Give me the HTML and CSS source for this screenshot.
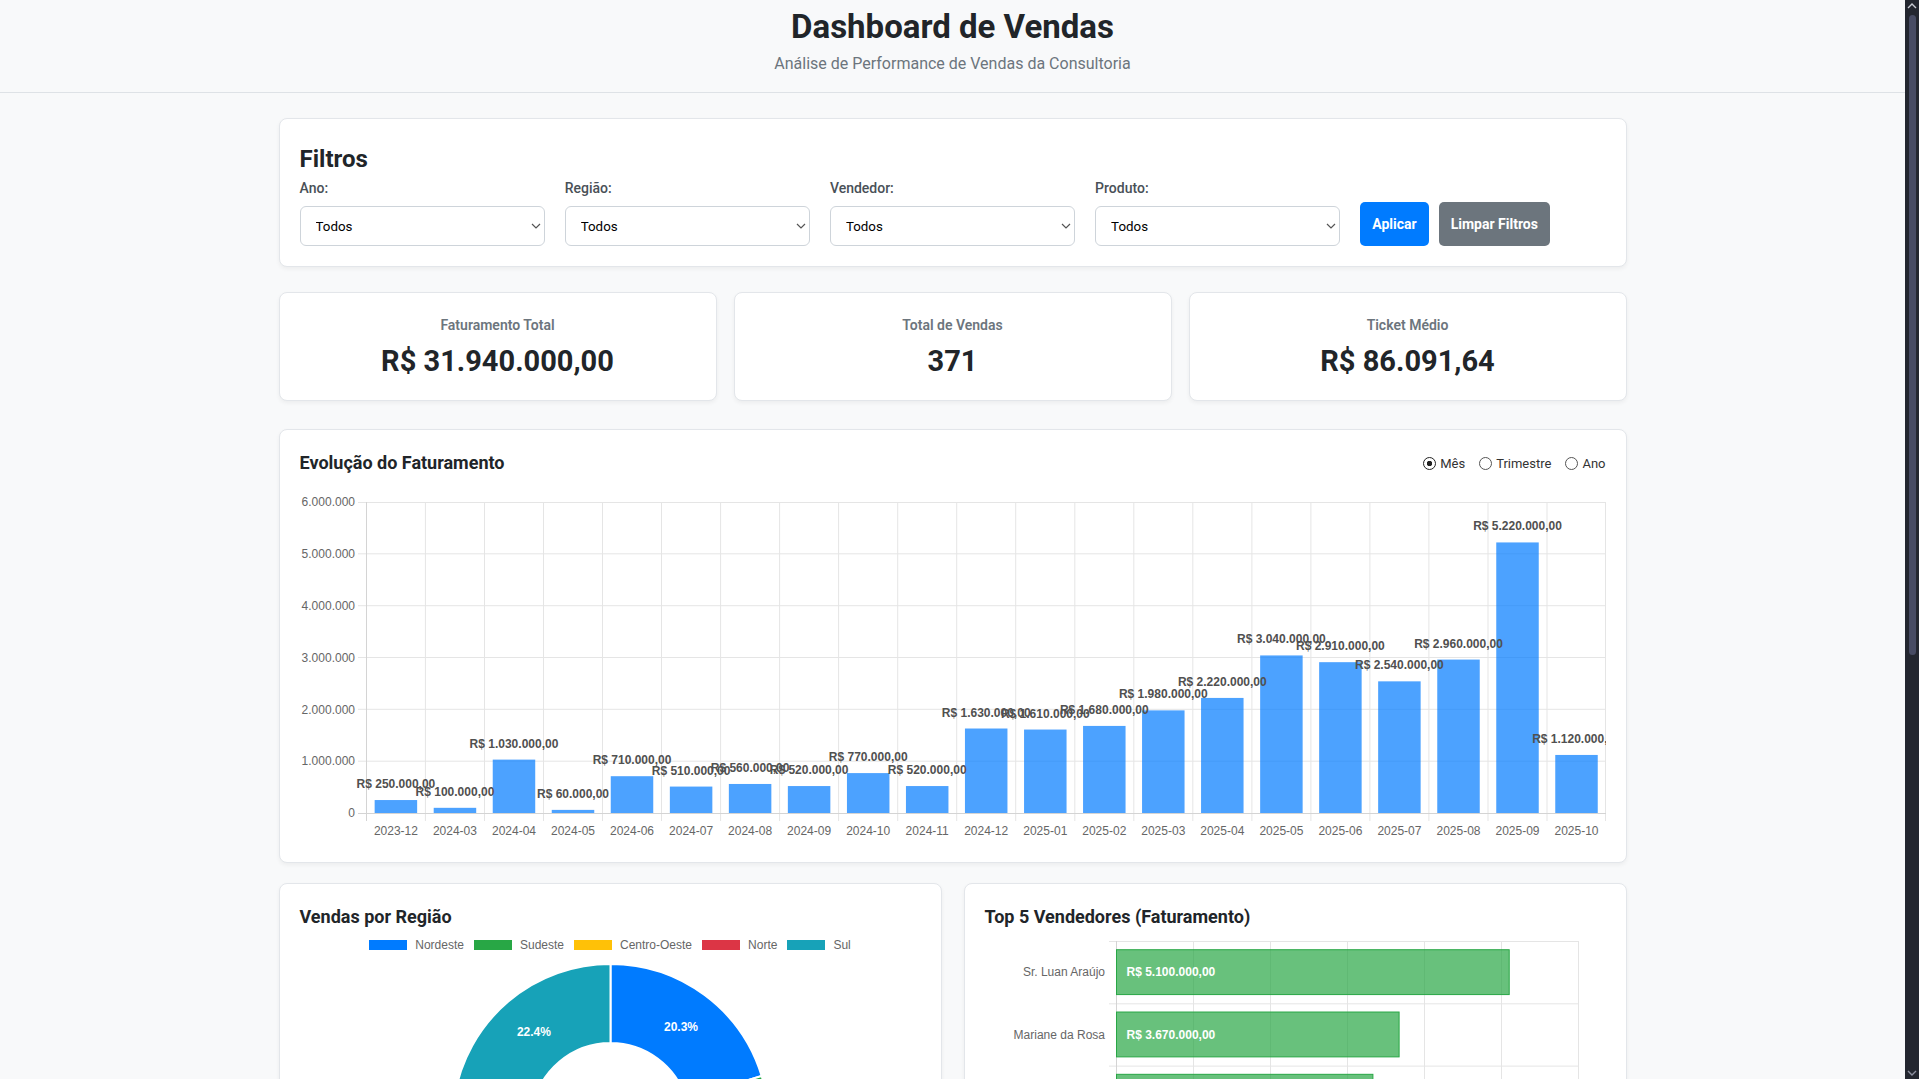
FILE: index.html
```html
<!DOCTYPE html>
<html lang="pt-BR">
<head>
<meta charset="utf-8">
<title>Dashboard de Vendas</title>
<link rel="stylesheet" href="styles.css">
</head>
<body>
<div class="fake-scrollbar" aria-hidden="true">
  <svg class="scroll-arrow scroll-arrow-up" width="10" height="6" viewBox="0 0 10 6"><path d="M1 5l4-4 4 4" fill="none" stroke="#c8cad3" stroke-width="1.4"/></svg>
  <div class="scroll-thumb"></div>
  <svg class="scroll-arrow scroll-arrow-down" width="10" height="6" viewBox="0 0 10 6"><path d="M1 1l4 4 4-4" fill="none" stroke="#8d90a0" stroke-width="1.4"/></svg>
</div>

<header class="page-header">
  <h1 class="page-title">Dashboard de Vendas</h1>
  <p class="page-subtitle">Análise de Performance de Vendas da Consultoria</p>
</header>

<main class="container">
  <section class="card filters-card">
    <h2 class="filters-title">Filtros</h2>
    <div class="filters-row">
      <div class="filter-group">
        <label class="filter-label" for="f-ano">Ano:</label>
        <div class="select-wrap">
          <select id="f-ano" class="filter-select"><option>Todos</option></select>
          <svg class="select-chevron" width="10" height="6" viewBox="0 0 10 6"><path d="M1 1l4 4 4-4" fill="none" stroke="#555" stroke-width="1.2"/></svg>
        </div>
      </div>
      <div class="filter-group">
        <label class="filter-label" for="f-regiao">Região:</label>
        <div class="select-wrap">
          <select id="f-regiao" class="filter-select"><option>Todos</option></select>
          <svg class="select-chevron" width="10" height="6" viewBox="0 0 10 6"><path d="M1 1l4 4 4-4" fill="none" stroke="#555" stroke-width="1.2"/></svg>
        </div>
      </div>
      <div class="filter-group">
        <label class="filter-label" for="f-vendedor">Vendedor:</label>
        <div class="select-wrap">
          <select id="f-vendedor" class="filter-select"><option>Todos</option></select>
          <svg class="select-chevron" width="10" height="6" viewBox="0 0 10 6"><path d="M1 1l4 4 4-4" fill="none" stroke="#555" stroke-width="1.2"/></svg>
        </div>
      </div>
      <div class="filter-group">
        <label class="filter-label" for="f-produto">Produto:</label>
        <div class="select-wrap">
          <select id="f-produto" class="filter-select"><option>Todos</option></select>
          <svg class="select-chevron" width="10" height="6" viewBox="0 0 10 6"><path d="M1 1l4 4 4-4" fill="none" stroke="#555" stroke-width="1.2"/></svg>
        </div>
      </div>
      <div class="filter-group filter-actions">
        <button class="btn btn-primary" type="button">Aplicar</button>
        <button class="btn btn-secondary" type="button">Limpar Filtros</button>
      </div>
    </div>
  </section>

  <section class="kpi-row">
    <div class="card kpi-card">
      <div class="kpi-label">Faturamento Total</div>
      <div class="kpi-value">R$ 31.940.000,00</div>
    </div>
    <div class="card kpi-card">
      <div class="kpi-label">Total de Vendas</div>
      <div class="kpi-value">371</div>
    </div>
    <div class="card kpi-card">
      <div class="kpi-label">Ticket Médio</div>
      <div class="kpi-value">R$ 86.091,64</div>
    </div>
  </section>

  <section class="card evolution-card">
    <div class="chart-header">
      <h3 class="chart-title">Evolução do Faturamento</h3>
      <div class="period-options">
        <label class="radio-option"><input class="radio-input" type="radio" name="period" checked>Mês</label>
        <label class="radio-option"><input class="radio-input" type="radio" name="period">Trimestre</label>
        <label class="radio-option"><input class="radio-input" type="radio" name="period">Ano</label>
      </div>
    </div>
    <svg class="evolution-chart" width="1306" height="352" viewBox="0 0 1306 352">
      <g class="grid" stroke="#e5e5e5" stroke-width="1">
        <line x1="58" y1="12.5" x2="1306" y2="12.5"/>
        <line x1="58" y1="63.8" x2="1306" y2="63.8"/>
        <line x1="58" y1="115.7" x2="1306" y2="115.7"/>
        <line x1="58" y1="167.5" x2="1306" y2="167.5"/>
        <line x1="58" y1="219.3" x2="1306" y2="219.3"/>
        <line x1="58" y1="271.2" x2="1306" y2="271.2"/>
        <line x1="125.4" y1="12" x2="125.4" y2="331"/>
        <line x1="184.5" y1="12" x2="184.5" y2="331"/>
        <line x1="243.5" y1="12" x2="243.5" y2="331"/>
        <line x1="302.5" y1="12" x2="302.5" y2="331"/>
        <line x1="361.5" y1="12" x2="361.5" y2="331"/>
        <line x1="420.6" y1="12" x2="420.6" y2="331"/>
        <line x1="479.6" y1="12" x2="479.6" y2="331"/>
        <line x1="538.6" y1="12" x2="538.6" y2="331"/>
        <line x1="597.7" y1="12" x2="597.7" y2="331"/>
        <line x1="656.7" y1="12" x2="656.7" y2="331"/>
        <line x1="715.7" y1="12" x2="715.7" y2="331"/>
        <line x1="774.8" y1="12" x2="774.8" y2="331"/>
        <line x1="833.8" y1="12" x2="833.8" y2="331"/>
        <line x1="892.8" y1="12" x2="892.8" y2="331"/>
        <line x1="951.9" y1="12" x2="951.9" y2="331"/>
        <line x1="1010.9" y1="12" x2="1010.9" y2="331"/>
        <line x1="1069.9" y1="12" x2="1069.9" y2="331"/>
        <line x1="1128.9" y1="12" x2="1128.9" y2="331"/>
        <line x1="1188" y1="12" x2="1188" y2="331"/>
        <line x1="1247" y1="12" x2="1247" y2="331"/>
        <line x1="1305.5" y1="12" x2="1305.5" y2="331"/>
      </g>
      <g stroke="#d4d4d4" stroke-width="1">
        <line x1="66.5" y1="12" x2="66.5" y2="331"/>
        <line x1="58" y1="323.5" x2="1306" y2="323.5"/>
      </g>
      <g class="axis-text" text-anchor="end">
        <text x="55" y="16">6.000.000</text>
        <text x="55" y="68">5.000.000</text>
        <text x="55" y="120">4.000.000</text>
        <text x="55" y="171.5">3.000.000</text>
        <text x="55" y="223.5">2.000.000</text>
        <text x="55" y="275">1.000.000</text>
        <text x="55" y="327">0</text>
      </g>
      <g class="bars-blue">
        <rect x="74.65" y="310.04" width="42.5" height="12.96"/>
        <rect x="133.70" y="317.82" width="42.5" height="5.18"/>
        <rect x="192.73" y="269.61" width="42.5" height="53.39"/>
        <rect x="251.75" y="319.89" width="42.5" height="3.11"/>
        <rect x="310.75" y="286.20" width="42.5" height="36.80"/>
        <rect x="369.85" y="296.57" width="42.5" height="26.43"/>
        <rect x="428.85" y="293.97" width="42.5" height="29.03"/>
        <rect x="487.85" y="296.05" width="42.5" height="26.95"/>
        <rect x="546.95" y="283.09" width="42.5" height="39.91"/>
        <rect x="605.95" y="296.05" width="42.5" height="26.95"/>
        <rect x="664.95" y="238.51" width="42.5" height="84.49"/>
        <rect x="724.05" y="239.55" width="42.5" height="83.45"/>
        <rect x="783.05" y="235.92" width="42.5" height="87.08"/>
        <rect x="842.05" y="220.37" width="42.5" height="102.63"/>
        <rect x="901.05" y="207.93" width="42.5" height="115.07"/>
        <rect x="960.15" y="165.43" width="42.5" height="157.57"/>
        <rect x="1019.15" y="172.17" width="42.5" height="150.83"/>
        <rect x="1078.15" y="191.34" width="42.5" height="131.66"/>
        <rect x="1137.25" y="169.57" width="42.5" height="153.43"/>
        <rect x="1196.25" y="52.43" width="42.5" height="270.57"/>
        <rect x="1255.25" y="264.95" width="42.5" height="58.05"/>
      </g>
      <g class="data-labels" text-anchor="middle">
        <text x="95.9" y="298">R$ 250.000,00</text>
        <text x="154.95" y="305.8">R$ 100.000,00</text>
        <text x="213.98" y="257.6">R$ 1.030.000,00</text>
        <text x="273" y="307.9">R$ 60.000,00</text>
        <text x="332" y="274.2">R$ 710.000,00</text>
        <text x="391.1" y="284.6">R$ 510.000,00</text>
        <text x="450.1" y="282">R$ 560.000,00</text>
        <text x="509.1" y="284">R$ 520.000,00</text>
        <text x="568.2" y="271.1">R$ 770.000,00</text>
        <text x="627.2" y="284">R$ 520.000,00</text>
        <text x="686.2" y="226.5">R$ 1.630.000,00</text>
        <text x="745.3" y="227.5">R$ 1.610.000,00</text>
        <text x="804.3" y="223.9">R$ 1.680.000,00</text>
        <text x="863.3" y="208.4">R$ 1.980.000,00</text>
        <text x="922.3" y="195.9">R$ 2.220.000,00</text>
        <text x="981.4" y="153.4">R$ 3.040.000,00</text>
        <text x="1040.4" y="160.2">R$ 2.910.000,00</text>
        <text x="1099.4" y="179.3">R$ 2.540.000,00</text>
        <text x="1158.5" y="157.6">R$ 2.960.000,00</text>
        <text x="1217.5" y="40.4">R$ 5.220.000,00</text>
        <text x="1276.5" y="253">R$ 1.120.000,00</text>
      </g>
      <g class="axis-text" text-anchor="middle">
        <text x="95.9" y="345">2023-12</text>
        <text x="154.95" y="345">2024-03</text>
        <text x="213.98" y="345">2024-04</text>
        <text x="273" y="345">2024-05</text>
        <text x="332" y="345">2024-06</text>
        <text x="391.1" y="345">2024-07</text>
        <text x="450.1" y="345">2024-08</text>
        <text x="509.1" y="345">2024-09</text>
        <text x="568.2" y="345">2024-10</text>
        <text x="627.2" y="345">2024-11</text>
        <text x="686.2" y="345">2024-12</text>
        <text x="745.3" y="345">2025-01</text>
        <text x="804.3" y="345">2025-02</text>
        <text x="863.3" y="345">2025-03</text>
        <text x="922.3" y="345">2025-04</text>
        <text x="981.4" y="345">2025-05</text>
        <text x="1040.4" y="345">2025-06</text>
        <text x="1099.4" y="345">2025-07</text>
        <text x="1158.5" y="345">2025-08</text>
        <text x="1217.5" y="345">2025-09</text>
        <text x="1276.5" y="345">2025-10</text>
      </g>
    </svg>
  </section>

  <section class="charts-row">
    <div class="card chart-card">
      <h3 class="chart-title">Vendas por Região</h3>
      <ul class="legend">
        <li class="legend-item"><span class="legend-box box-nordeste"></span>Nordeste</li>
        <li class="legend-item"><span class="legend-box box-sudeste"></span>Sudeste</li>
        <li class="legend-item"><span class="legend-box box-centro"></span>Centro-Oeste</li>
        <li class="legend-item"><span class="legend-box box-norte"></span>Norte</li>
        <li class="legend-item"><span class="legend-box box-sul"></span>Sul</li>
      </ul>
      <svg class="doughnut-chart" width="621" height="330" viewBox="0 0 621 330">
        <g transform="translate(310.5 162)" stroke="#fff" stroke-width="2" stroke-linejoin="round">
          <path fill="#007bff" d="M0,-158 A158,158 0 0 1 151.16,-45.98 L75.58,-22.99 A79,79 0 0 0 0,-79 Z"/>
          <path fill="#28a745" d="M151.16,-45.98 A158,158 0 0 1 74.38,139.40 L37.19,69.70 A79,79 0 0 0 75.58,-22.99 Z"/>
          <path fill="#ffc107" d="M74.38,139.40 A158,158 0 0 1 -90.44,129.56 L-45.22,64.78 A79,79 0 0 0 37.19,69.70 Z"/>
          <path fill="#dc3545" d="M-90.44,129.56 A158,158 0 0 1 -155.90,-25.70 L-77.95,-12.85 A79,79 0 0 0 -45.22,64.78 Z"/>
          <path fill="#17a2b8" d="M-155.90,-25.70 A158,158 0 0 1 0,-158 L0,-79 A79,79 0 0 0 -77.95,-12.85 Z"/>
        </g>
        <g class="pie-labels" transform="translate(310.5 162)" text-anchor="middle">
          <text x="70.5" y="-91">20.3%</text>
          <text x="109.5" y="49.3">21.9%</text>
          <text x="-7.1" y="122.3">17.5%</text>
          <text x="-109.2" y="50">17.9%</text>
          <text x="-76.6" y="-86.4">22.4%</text>
        </g>
      </svg>
    </div>
    <div class="card chart-card">
      <h3 class="chart-title">Top 5 Vendedores (Faturamento)</h3>
      <svg class="top-chart" width="621" height="350" viewBox="0 0 621 350">
        <g stroke="#e5e5e5" stroke-width="1">
          <line x1="208.5" y1="6" x2="208.5" y2="325.5"/>
          <line x1="285.5" y1="6" x2="285.5" y2="325.5"/>
          <line x1="362.5" y1="6" x2="362.5" y2="325.5"/>
          <line x1="439.5" y1="6" x2="439.5" y2="325.5"/>
          <line x1="516.5" y1="6" x2="516.5" y2="325.5"/>
          <line x1="593.5" y1="6" x2="593.5" y2="325.5"/>
          <line x1="124" y1="6.5" x2="593.5" y2="6.5"/>
          <line x1="124" y1="68.8" x2="593.5" y2="68.8"/>
          <line x1="124" y1="131.1" x2="593.5" y2="131.1"/>
          <line x1="124" y1="193.4" x2="593.5" y2="193.4"/>
          <line x1="124" y1="255.7" x2="593.5" y2="255.7"/>
        </g>
        <g stroke="#d4d4d4" stroke-width="1">
          <line x1="131.5" y1="6" x2="131.5" y2="325.5"/>
          <line x1="124" y1="317.5" x2="593.5" y2="317.5"/>
        </g>
        <g class="bars-green">
          <rect x="131.5" y="14.72" width="392.7" height="44.86"/>
          <rect x="131.5" y="77.02" width="282.6" height="44.86"/>
          <rect x="131.5" y="139.32" width="256.4" height="44.86"/>
          <rect x="131.5" y="201.62" width="234.9" height="44.86"/>
          <rect x="131.5" y="263.92" width="222.5" height="44.86"/>
        </g>
        <g class="axis-text" text-anchor="end">
          <text x="120" y="41.2">Sr. Luan Araújo</text>
          <text x="120" y="103.5">Mariane da Rosa</text>
          <text x="120" y="165.8">Ana Clara Souza</text>
          <text x="120" y="228.1">Pedro Henrique Lima</text>
          <text x="120" y="290.4">Juliana Costa</text>
        </g>
        <g class="bar-values">
          <text x="141.5" y="41.2">R$ 5.100.000,00</text>
          <text x="141.5" y="103.5">R$ 3.670.000,00</text>
          <text x="141.5" y="165.8">R$ 3.330.000,00</text>
          <text x="141.5" y="228.1">R$ 3.050.000,00</text>
          <text x="141.5" y="290.4">R$ 2.890.000,00</text>
        </g>
        <g class="axis-text" text-anchor="middle">
          <text x="131.5" y="340">0</text>
          <text x="208.5" y="340">1.000.000</text>
          <text x="285.5" y="340">2.000.000</text>
          <text x="362.5" y="340">3.000.000</text>
          <text x="439.5" y="340">4.000.000</text>
          <text x="516.5" y="340">5.000.000</text>
          <text x="593.5" y="340">6.000.000</text>
        </g>
      </svg>
    </div>
  </section>

  <section class="card table-card">
    <h3 class="chart-title">Faturamento por Produto</h3>
    <table class="data-table">
      <thead>
        <tr><th>Produto</th><th>Vendas</th><th>Faturamento</th></tr>
      </thead>
      <tbody>
        <tr><td>Consultoria Estratégica</td><td>82</td><td>R$ 9.120.000,00</td></tr>
        <tr><td>Consultoria Financeira</td><td>76</td><td>R$ 7.340.000,00</td></tr>
        <tr><td>Treinamento Corporativo</td><td>91</td><td>R$ 6.210.000,00</td></tr>
        <tr><td>Auditoria de Processos</td><td>64</td><td>R$ 5.050.000,00</td></tr>
        <tr><td>Gestão de Projetos</td><td>58</td><td>R$ 4.220.000,00</td></tr>
      </tbody>
    </table>
  </section>
</main>
</body>
</html>
```

FILE: styles.css
```css
html {
  background: #f8f9fa;
}

body {
  margin: 0;
  padding-right: 14px;
  background: #f8f9fa;
  color: #212529;
  font-family: "Segoe UI", Roboto, "Noto Sans", "Liberation Sans", sans-serif;
}

/* Window scrollbar, drawn over the right edge */
.fake-scrollbar {
  position: fixed;
  top: 0;
  right: 0;
  width: 14px;
  height: 100vh;
  background: #23262f;
  z-index: 10;
}

.scroll-arrow {
  position: absolute;
  left: 2px;
}

.scroll-arrow-up {
  top: 3px;
}

.scroll-arrow-down {
  bottom: 3px;
}

.scroll-thumb {
  position: absolute;
  top: 15px;
  left: 4px;
  width: 7px;
  height: 640px;
  border-radius: 4px;
  background: #474b63;
}

.page-header {
  background: #f8f9fa;
  border-bottom: 1px solid #dee2e6;
  text-align: center;
  padding: 8px 0 16px;
}

.page-title {
  margin: 0;
  font-size: 33px;
  line-height: 38px;
  font-weight: 700;
  color: #212529;
}

.page-subtitle {
  margin: 6px 0 0;
  font-size: 16px;
  line-height: 24px;
  color: #6c757d;
}

.container {
  max-width: 1348px;
  margin: 25px auto 0;
  padding-bottom: 30px;
}

.card {
  background: #fff;
  border: 1px solid #e3e6ea;
  border-radius: 8px;
  box-shadow: 0 2px 4px rgba(0, 0, 0, 0.05);
  box-sizing: border-box;
}

/* Filters */
.filters-card {
  padding: 20px;
}

.filters-title {
  margin: 6px 0 4px;
  font-size: 24px;
  line-height: 29px;
  font-weight: 700;
}

.filters-row {
  display: flex;
  gap: 20px;
}

.filter-group {
  flex: 1 1 0;
  min-width: 0;
  display: flex;
  flex-direction: column;
}

.filter-label {
  font-size: 14px;
  line-height: 20px;
  font-weight: 500;
  color: #495057;
}

.select-wrap {
  position: relative;
  margin-top: 8px;
}

.filter-select {
  appearance: none;
  -webkit-appearance: none;
  width: 100%;
  height: 40px;
  box-sizing: border-box;
  padding: 0 24px 0 15px;
  border: 1px solid #ced4da;
  border-radius: 6px;
  background: #fff;
  color: #000;
  font-family: inherit;
  font-size: 13.33px;
  font-weight: 400;
}

.select-chevron {
  position: absolute;
  right: 4px;
  top: 17px;
  pointer-events: none;
}

.filter-actions {
  flex-direction: row;
  align-items: flex-end;
  gap: 10px;
}

.btn {
  height: 44px;
  padding: 0 12px;
  border: none;
  border-radius: 5px;
  color: #fff;
  font-family: inherit;
  font-size: 14px;
  font-weight: 700;
  white-space: nowrap;
}

.btn-primary {
  background: #007bff;
}

.btn-secondary {
  background: #6c757d;
}

/* KPIs */
.kpi-row {
  display: grid;
  grid-template-columns: repeat(3, 1fr);
  gap: 17px;
  margin-top: 25px;
}

.kpi-card {
  padding: 24px 20px 22px;
  text-align: center;
}

.kpi-label {
  font-size: 14px;
  line-height: 17px;
  font-weight: 600;
  color: #6c757d;
}

.kpi-value {
  margin-top: 10px;
  font-size: 29px;
  line-height: 34px;
  font-weight: 700;
  color: #212529;
}

/* Evolution chart */
.evolution-card {
  margin-top: 28px;
  padding: 20px;
}

.chart-header {
  display: flex;
  justify-content: space-between;
  align-items: center;
}

.chart-title {
  margin: 0;
  font-size: 18px;
  line-height: 26px;
  font-weight: 700;
  color: #212529;
}

.period-options {
  display: flex;
  gap: 14px;
  font-size: 13px;
  color: #333;
}

.radio-option {
  display: flex;
  align-items: center;
}

.radio-input {
  appearance: none;
  -webkit-appearance: none;
  width: 13px;
  height: 13px;
  margin: 0 4px 0 0;
  border: 1px solid #555;
  border-radius: 50%;
  box-sizing: border-box;
  background: #fff;
}

.radio-input:checked {
  background: radial-gradient(circle, #222 0 2.5px, #fff 3px);
  border-color: #222;
}

.evolution-chart {
  display: block;
  margin-top: 14px;
  overflow: hidden;
}

.axis-text {
  font-family: "Liberation Sans", Arial, sans-serif;
  font-size: 12px;
  fill: #666;
}

.bars-blue rect {
  fill: #007bff;
  fill-opacity: 0.7;
}

.data-labels {
  font-family: "Liberation Sans", Arial, sans-serif;
  font-size: 12px;
  font-weight: 700;
  fill: #505050;
}

/* Bottom row */
.charts-row {
  display: grid;
  grid-template-columns: 1fr 1fr;
  gap: 22px;
  margin-top: 20px;
}

.chart-card {
  padding: 20px;
}

.legend {
  display: flex;
  justify-content: center;
  gap: 10px;
  margin: 8px 0 0;
  padding: 0;
  list-style: none;
  font-family: "Liberation Sans", Arial, sans-serif;
  font-size: 12px;
  line-height: 14px;
  color: #666;
}

.legend-item {
  display: flex;
  align-items: center;
}

.legend-box {
  width: 38px;
  height: 10px;
  margin-right: 8px;
}

.box-nordeste { background: #007bff; }
.box-sudeste { background: #28a745; }
.box-centro { background: #ffc107; }
.box-norte { background: #dc3545; }
.box-sul { background: #17a2b8; }

.doughnut-chart {
  display: block;
  margin-top: 8px;
}

.pie-labels {
  font-family: "Liberation Sans", Arial, sans-serif;
  font-size: 12px;
  font-weight: 700;
  fill: #fff;
}

.top-chart {
  display: block;
  margin-top: 5px;
}

.bars-green rect {
  fill: #28a745;
  fill-opacity: 0.7;
  stroke: #28a745;
  stroke-width: 1;
}

.bar-values {
  font-family: "Liberation Sans", Arial, sans-serif;
  font-size: 12px;
  font-weight: 700;
  fill: #fff;
}

/* Table */
.table-card {
  margin-top: 22px;
  padding: 20px;
}

.data-table {
  width: 100%;
  margin-top: 12px;
  border-collapse: collapse;
  font-size: 14px;
}

.data-table th,
.data-table td {
  padding: 12px;
  text-align: left;
  border-bottom: 1px solid #dee2e6;
}

.data-table th {
  color: #495057;
  font-weight: 600;
  background: #f8f9fa;
}
```
